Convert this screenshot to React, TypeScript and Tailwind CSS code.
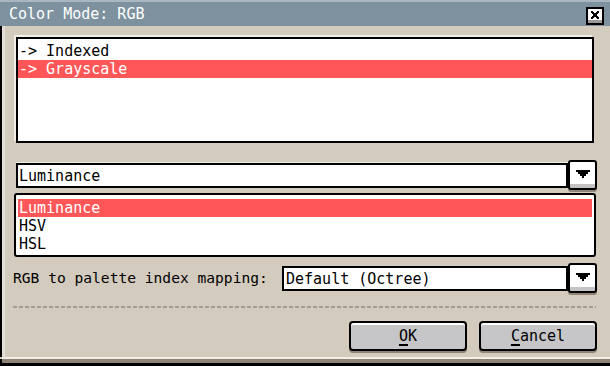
import { ReactNode } from 'react';

const items = ['-> Indexed', '-> Grayscale'];
const modes = ['Luminance', 'HSV', 'HSL'];

function ArrowDown() {
  return (
    <svg width="14" height="8" viewBox="0 0 14 8" shapeRendering="crispEdges">
      <path d="M0 0h14v2h-2v2h-2v2h-2v2h-2v-2h-2v-2h-2v-2h-2z" fill="#000" />
    </svg>
  );
}

function DropButton() {
  return (
    <div className="w-[29px] h-[30px] shrink-0 flex items-center justify-center border-2 border-black rounded-[3px] bg-white shadow-[inset_0_-4px_0_#c4c2c2,0_2px_0_#8d8377]">
      <div className="-mt-[2px]">
        <ArrowDown />
      </div>
    </div>
  );
}

function Row({ selected, children }: { selected?: boolean; children: ReactNode }) {
  return (
    <div
      className={
        selected
          ? 'h-[18px] pl-[1px] leading-[18px] bg-[#ff5757] text-white'
          : 'h-[18px] pl-[1px] leading-[18px] text-black'
      }
    >
      {children}
    </div>
  );
}

function DialogButton({ label, rest }: { label: string; rest: string }) {
  return (
    <button className="w-[118px] h-[30px] border-2 border-black rounded-[4px] bg-[#c6c6c8] text-black shadow-[inset_0_2px_0_#ffffff,0_2px_0_#8d8377] flex items-center justify-center">
      <span>
        <span className="underline decoration-2 underline-offset-[3px]">{label}</span>
        {rest}
      </span>
    </button>
  );
}

export default function App() {
  return (
    <div className="w-[610px] h-[366px] flex flex-col overflow-hidden bg-[#d3cbbe] font-['DejaVu_Sans_Mono',monospace] text-[15px]">
      {/* title bar */}
      <div className="h-[26px] shrink-0 flex items-center justify-between bg-[#7d929e] border-t-2 border-[#aab7c0] pl-[9px] pr-[6px] text-white">
        <span className="leading-none">Color Mode: RGB</span>
        <div className="mt-[4px] w-[18px] h-[18px] border-2 border-black bg-white flex items-start justify-center pt-[2px] shadow-[inset_0_-3px_0_#9a9a9a]">
          <svg width="8" height="8" viewBox="0 0 8 8" shapeRendering="crispEdges">
            <path d="M0 0L8 8M8 0L0 8" stroke="#000" strokeWidth="1.6" />
          </svg>
        </div>
      </div>

      {/* body */}
      <div className="flex-1 flex border-l-2 border-black">
        <div className="flex-1 flex flex-col border-l-[3px] border-[#e4dfd6] pl-[8px] pt-[11px]">
          {/* mode list */}
          <div className="ml-[3px] w-[578px] h-[106px] border-2 border-black bg-white pt-[3px] shadow-[-2px_-2px_0_#f2eee8]">
            {items.map((t, i) => (
              <Row key={t} selected={i === 1}>
                {t}
              </Row>
            ))}
          </div>

          {/* grayscale algorithm combo */}
          <div className="ml-[3px] mt-[17px] h-[30px] flex items-center">
            <div className="w-[552px] h-[25px] border-2 border-black bg-white pl-[1px] leading-[23px] shadow-[0_-1px_0_#f2eee8]">
              Luminance
            </div>
            <DropButton />
          </div>

          {/* dropdown popup */}
          <div className="ml-[1px] mt-[3px] w-[582px] h-[64px] border-2 border-black rounded-[3px] bg-white pt-[4px] px-[2px]">
            {modes.map((m, i) => (
              <Row key={m} selected={i === 0}>
                {m}
              </Row>
            ))}
          </div>

          {/* palette mapping */}
          <div className="mt-[6px] h-[30px] flex items-center">
            <span className="w-[269px] text-black text-[14.6px]">RGB to palette index mapping:</span>
            <div className="w-[286px] h-[25px] border-2 border-black bg-white pl-[2px] leading-[23px] text-black">
              Default (Octree)
            </div>
            <DropButton />
          </div>

          {/* separator */}
          <div className="mt-[13px] w-[583px] h-[2px] bg-[repeating-linear-gradient(to_right,#a49d92_0_4px,transparent_4px_6px)]" />

          {/* buttons */}
          <div className="mt-[13px] w-[584px] flex justify-end gap-[12px]">
            <DialogButton label="O" rest="K" />
            <DialogButton label="C" rest="ancel" />
          </div>
        </div>
      </div>

      {/* bottom edge */}
      <div className="shrink-0 h-[2px] ml-[2px] bg-[#f2eee8]" />
      <div className="shrink-0 h-[4px] bg-[#8d8377] border-l-2 border-black" />
      <div className="shrink-0 h-[3px] bg-black" />
    </div>
  );
}
